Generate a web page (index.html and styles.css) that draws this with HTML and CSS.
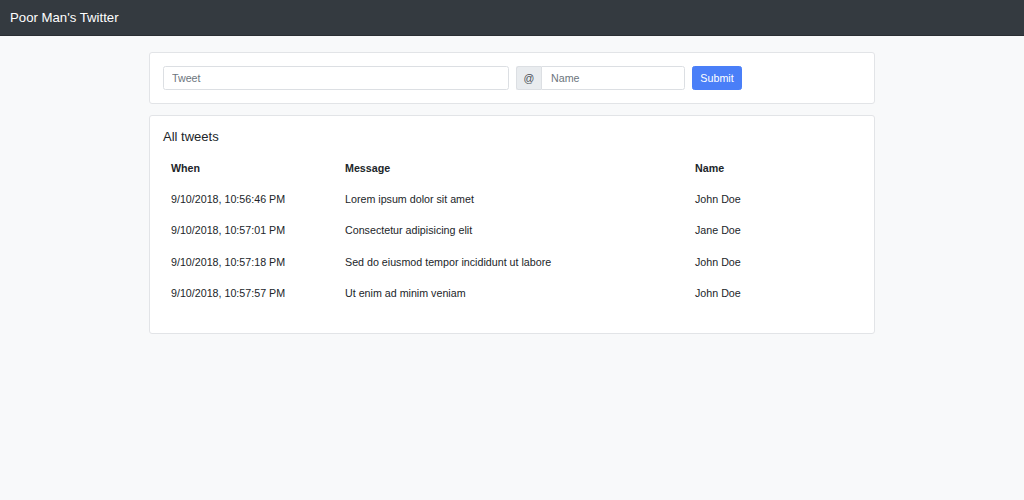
FILE: index.html
```html
<!DOCTYPE html>
<html>
<head>
<meta charset="utf-8">
<link rel="stylesheet" href="styles.css">
</head>
<body>
<nav class="navbar"><span class="brand">Poor Man's Twitter</span></nav>
<main class="container">
  <section class="card">
    <form class="tweet-form">
      <input class="field tweet" type="text" placeholder="Tweet">
      <div class="input-group">
        <span class="prepend">@</span>
        <input class="field name" type="text" placeholder="Name">
      </div>
      <button class="btn" type="button">Submit</button>
    </form>
  </section>
  <section class="card">
    <h5 class="card-title">All tweets</h5>
    <table class="table">
      <thead>
        <tr><th class="c-when">When</th><th class="c-msg">Message</th><th class="c-name">Name</th></tr>
      </thead>
      <tbody>
        <tr><td>9/10/2018, 10:56:46 PM</td><td>Lorem ipsum dolor sit amet</td><td>John Doe</td></tr>
        <tr><td>9/10/2018, 10:57:01 PM</td><td>Consectetur adipisicing elit</td><td>Jane Doe</td></tr>
        <tr><td>9/10/2018, 10:57:18 PM</td><td>Sed do eiusmod tempor incididunt ut labore</td><td>John Doe</td></tr>
        <tr><td>9/10/2018, 10:57:57 PM</td><td>Ut enim ad minim veniam</td><td>John Doe</td></tr>
      </tbody>
    </table>
  </section>
</main>
</body>
</html>
```
FILE: styles.css
```css
* { box-sizing: border-box; }
html, body { margin: 0; padding: 0; }
body {
  background: #f8f9fa;
  font-family: "Liberation Sans", Arial, sans-serif;
  font-size: 10.7px;
  color: #212529;
  height: 500px;
}
.navbar {
  height: 36px;
  background: #343a40;
  display: flex;
  align-items: center;
  padding: 0 10px;
  border-bottom: 1px solid #2a2e33;
}
.brand {
  color: #fff;
  font-size: 13.2px;
}
.container {
  width: 726px;
  margin: 16px auto 0;
  display: flex;
  flex-direction: column;
  gap: 11px;
}
.card {
  background: #fff;
  border: 1px solid #e2e4e7;
  border-radius: 3px;
  padding: 13px;
}
.tweet-form {
  display: flex;
  align-items: center;
  margin: 0;
}
.field {
  height: 24px;
  border: 1px solid #dcdfe3;
  border-radius: 2.5px;
  padding: 0 8px;
  font-family: inherit;
  font-size: 10.7px;
  color: #495057;
  background: #fff;
  outline: none;
}
.field::placeholder { color: #6c757d; }
.tweet { width: 346px; }
.input-group {
  display: flex;
  margin-left: 7px;
}
.prepend {
  width: 25px;
  height: 24px;
  display: flex;
  align-items: center;
  justify-content: center;
  background: #e9ecef;
  border: 1px solid #dcdfe3;
  border-right: none;
  border-radius: 2.5px 0 0 2.5px;
  color: #495057;
  font-size: 10.7px;
}
.name {
  width: 144px;
  border-radius: 0 2.5px 2.5px 0;
  padding-left: 9px;
}
.btn {
  margin-left: 7px;
  width: 50px;
  height: 24px;
  background: #4a7ff8;
  border: 1px solid #4a7ff8;
  border-radius: 2.5px;
  color: #fff;
  font-family: inherit;
  font-size: 10.7px;
  padding: 0;
}
.card-title {
  margin: 0 0 7px;
  font-size: 13px;
  font-weight: 400;
  line-height: 16px;
}
.table {
  width: 100%;
  border-collapse: collapse;
  margin-bottom: 11px;
}
.table th, .table td {
  text-align: left;
  padding: 0 8px;
  height: 31.4px;
  vertical-align: middle;
}
.table th { font-weight: 700; }
.c-when { width: 174px; }
.c-msg { width: 350px; }
```
